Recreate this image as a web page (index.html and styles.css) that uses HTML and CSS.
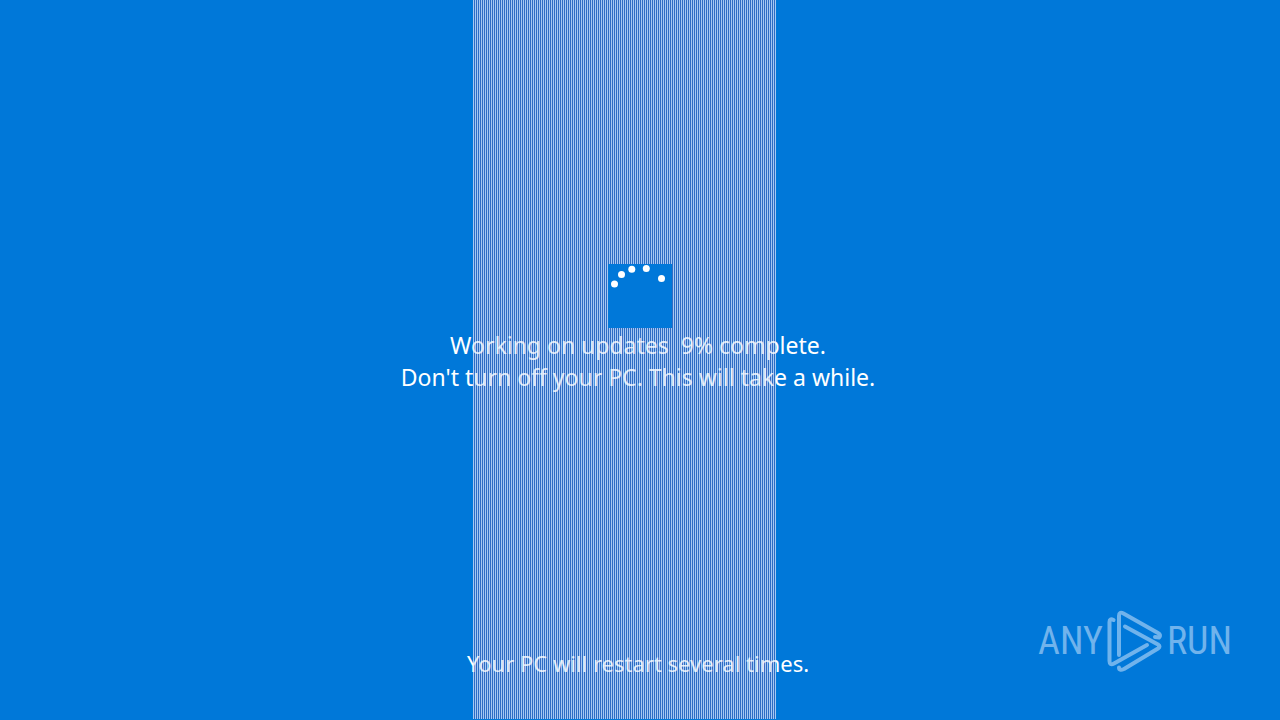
FILE: index.html
```
<!DOCTYPE html>
<html lang="en">
<head>
    <meta charset="UTF-8">
    <meta name="viewport" content="width=device-width, initial-scale=1.0">
    <title>Working on updates</title>
    <link rel="stylesheet" href="styles.css">
</head>
<body>
    <div class="stripes"></div>
    <main class="update-screen">
        <svg class="spinner" viewBox="0 0 64 64" aria-hidden="true">
            <circle cx="6.5" cy="20" r="3.5"/>
            <circle cx="13.5" cy="10.5" r="3.5"/>
            <circle cx="23.8" cy="5.2" r="3.5"/>
            <circle cx="38.3" cy="4.6" r="3.5"/>
            <circle cx="53.5" cy="14.5" r="3.5"/>
        </svg>
        <p class="message progress">Working on updates&nbsp; 9% complete.</p>
        <p class="message warning">Don't turn off your PC. This will take a while.</p>
        <p class="message restart">Your PC will restart several times.</p>
    </main>
    <div class="stripes stripes-front"></div>
    <div class="watermark">
        <span class="watermark-text">ANY</span>
        <svg class="watermark-logo" viewBox="0 0 56 64" aria-hidden="true">
            <path d="M6.500 11Q2.500 9 2.500 13V52Q2.500 57 7 54.500L40 36"/>
            <path d="M12 46V7Q12 2 16.500 4.500L51 24Q54.500 26 52 28.500L48 28"/>
            <path d="M18 17.500L51 35.500Q54 37.500 51 39.500L17 60Q12 62 12 58.500"/>
        </svg>
        <span class="watermark-text">RUN</span>
    </div>
</body>
</html>
```
FILE: styles.css
```
body {
    font-family: 'Noto Sans', sans-serif;
    background-color: #0078d9;
    color: #ffffff;
    margin: 0;
    min-height: 100vh;
    display: flex;
    position: relative;
}
.stripes {
    position: absolute;
    top: 0;
    bottom: 1px;
    left: 473px;
    width: 303px;
    background: repeating-linear-gradient(90deg, #a6c8f2 0 1px, #2e6cc4 1px 2px);
}
/* runs over the messages but not over the spinner */
.stripes-front {
    opacity: 0.2;
}
.update-screen {
    position: relative;
    flex: 1;
    display: flex;
    flex-direction: column;
    align-items: center;
    padding: 264px 0 41px;
}
.spinner {
    position: relative;
    z-index: 1;
    width: 64px;
    height: 64px;
    background-color: #0078d9;
    fill: #ffffff;
}
.message {
    margin: 0;
    font-size: 23px;
    line-height: 32px;
    padding-right: 4px;
}
.progress {
    margin-top: 1px;
}
.restart {
    margin-top: auto;
    font-size: 22px;
}
.watermark {
    position: absolute;
    right: 48px;
    bottom: 47px;
    display: flex;
    align-items: center;
    gap: 4px;
    color: #70b3ec;
}
.watermark-text {
    font-family: 'Roboto Condensed', 'Liberation Sans Narrow', Roboto, sans-serif;
    font-size: 38px;
    line-height: 64px;
}
.watermark-logo {
    width: 56px;
    height: 64px;
    fill: none;
    stroke: #70b3ec;
    stroke-width: 4;
    stroke-linecap: round;
    stroke-linejoin: round;
}
```
